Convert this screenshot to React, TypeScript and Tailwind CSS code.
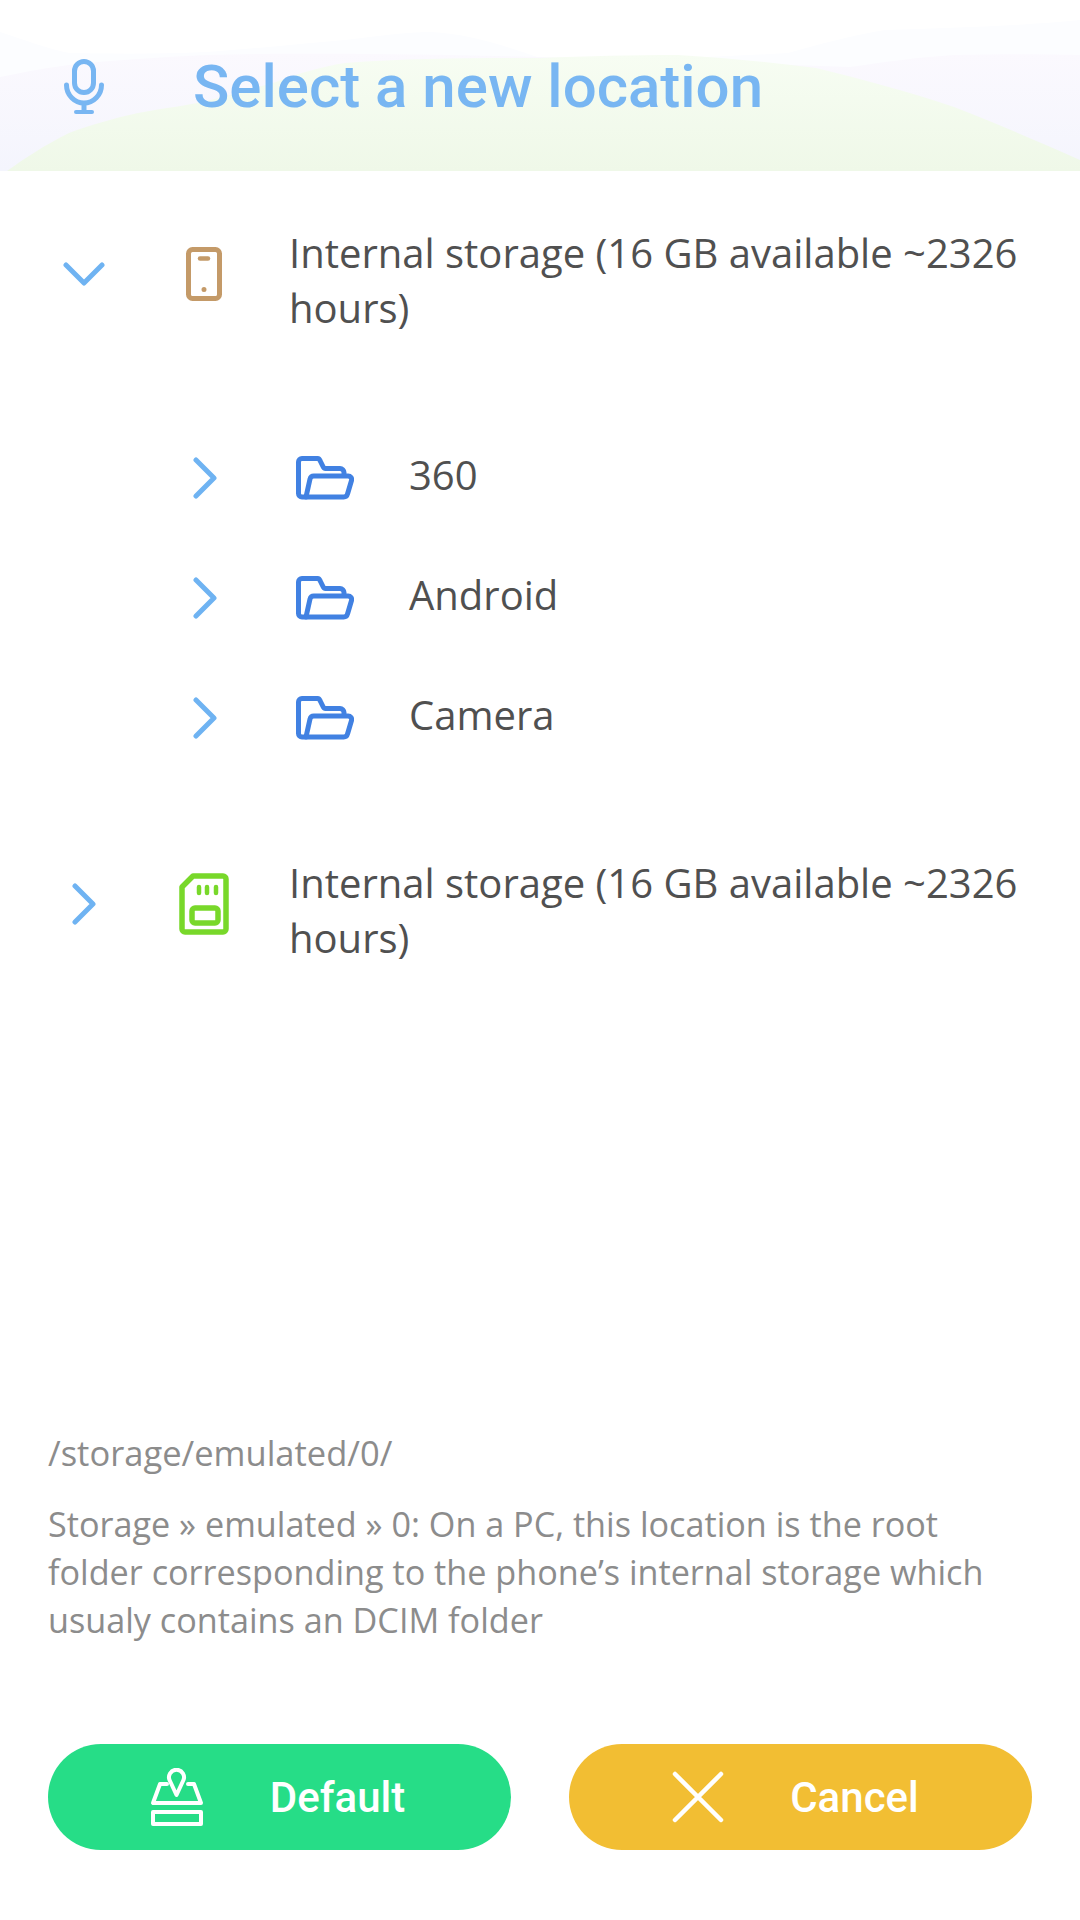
function Mic() {
  return (
    <svg width="40" height="56" viewBox="0 0 40 56" fill="none" stroke="#78b6f2" strokeWidth="5" strokeLinecap="round">
      <rect x="10.500" y="2.500" width="19" height="31" rx="9.500" />
      <path d="M2.500 26c0 10 8 18 17.500 18s17.500-8 17.500-18" />
      <path d="M20 44v8" strokeLinecap="butt" />
      <path d="M12 53h16" strokeWidth="4" />
    </svg>
  );
}

function ChevronDown() {
  return (
    <svg width="42" height="24" viewBox="0 0 42 24" fill="none" stroke="#6fb3f2" strokeWidth="5" strokeLinecap="round" strokeLinejoin="round">
      <path d="M3 3l18 18L39 3" />
    </svg>
  );
}

function ChevronRight() {
  return (
    <svg width="24" height="42" viewBox="0 0 24 42" fill="none" stroke="#6fb3f2" strokeWidth="5" strokeLinecap="round" strokeLinejoin="round">
      <path d="M3 3l18 18L3 39" />
    </svg>
  );
}

function Phone() {
  return (
    <svg width="36" height="54" viewBox="0 0 36 54" fill="none" stroke="#c49a68" strokeWidth="5">
      <rect x="2.500" y="2.500" width="31" height="49" rx="4" />
      <path d="M14 11.500h8" strokeWidth="4.500" strokeLinecap="round" />
      <circle cx="18" cy="42.500" r="1.500" fill="#c49a68" strokeWidth="2" />
    </svg>
  );
}

function Folder() {
  return (
    <svg width="58" height="44" viewBox="0 0 58 44" fill="none" stroke="#4181e2" strokeWidth="5" strokeLinecap="round" strokeLinejoin="round">
      <path d="M10 41H6a3.500 3.500 0 0 1-3.500-3.500V6A3.500 3.500 0 0 1 6 2.500h15a3 3 0 0 1 3 2l3 6a3 3 0 0 0 3 2h14a4 4 0 0 1 4 4V19" />
      <path d="M10 41l4-18a4 4 0 0 1 4-3h34a3.500 3.500 0 0 1 3.500 4.500l-4 13.500a4 4 0 0 1-4 3H10z" />
    </svg>
  );
}

function SdCard() {
  return (
    <svg width="50" height="62" viewBox="0 0 50 62" fill="none" stroke="#78d82a" strokeWidth="5.500" strokeLinejoin="round">
      <path d="M14 3h30a3 3 0 0 1 3 3v50a3 3 0 0 1-3 3H6a3 3 0 0 1-3-3V14L14 3z" />
      <path d="M20 14v6M28 14v6M37 14v6" strokeWidth="4.500" strokeLinecap="round" />
      <rect x="13" y="35" width="26" height="15" rx="3" />
    </svg>
  );
}

function DefaultIcon() {
  return (
    <svg width="54" height="58" viewBox="0 0 52 58" fill="none" stroke="#ffffff" strokeWidth="4" strokeLinejoin="round" strokeLinecap="round">
      <path d="M25.500 27L19 13a7.500 7.500 0 1 1 13 0z" />
      <path d="M16 16H9L2 35h48l-7-19h-6" />
      <rect x="2" y="44" width="48" height="12" />
    </svg>
  );
}

function CloseIcon() {
  return (
    <svg width="52" height="52" viewBox="0 0 52 52" fill="none" stroke="#ffffff" strokeWidth="4.500" strokeLinecap="round">
      <path d="M3 3l46 46M49 3L3 49" />
    </svg>
  );
}

function HeaderWaves() {
  return (
    <svg className="absolute inset-0" width="1080" height="171" viewBox="0 0 1080 171" preserveAspectRatio="none">
      <defs>
        <linearGradient id="greenWave" x1="0" y1="0" x2="0" y2="1">
          <stop offset="0" stopColor="#f7fdf3" />
          <stop offset="1" stopColor="#eff8e8" />
        </linearGradient>
        <linearGradient id="pinkWave" x1="0" y1="0" x2="0" y2="1">
          <stop offset="0" stopColor="#fbf9fe" />
          <stop offset="1" stopColor="#f4f5fd" />
        </linearGradient>
      </defs>
      <path d="M0 32C25 40 45 48 69 53C120 54 160 54 207 52C260 48 300 44 345 40C380 36 405 32 431 32C470 34 505 46 540 58C620 60 700 58 788 53C820 44 850 36 885 30C950 28 1020 26 1080 20V171H0Z" fill="#fcfdff" />
      <path d="M0 77C25 72 45 68 69 65C115 60 160 57 207 55C400 50 640 60 850 67C885 62 920 57 954 55C1000 54 1040 54 1080 55V171H0Z" fill="url(#pinkWave)" />
      <path d="M7 171C25 158 45 145 69 133C90 125 115 118 138 113C165 108 190 105 207 101C230 95 255 88 276 82C300 73 320 67 345 63C410 58 475 58 540 58C590 56 630 55 678 55C725 58 770 62 816 68C865 80 910 92 954 107C1000 125 1040 142 1080 160V171Z" fill="url(#greenWave)" />
    </svg>
  );
}

function StorageRow({ chevron, icon }: { chevron: React.ReactNode; icon: React.ReactNode }) {
  return (
    <div className="flex items-center">
      <div className="flex w-[144px] justify-center pb-[12px] pl-[23px]">{chevron}</div>
      <div className="flex w-[120px] justify-center pb-[12px]">{icon}</div>
      <p className="ml-[25px] w-[760px] text-[40px] leading-[55px] text-[#505050]">
        Internal storage (16 GB available ~2326 hours)
      </p>
    </div>
  );
}

function FolderRow({ name }: { name: string }) {
  return (
    <div className="flex h-[120px] items-center pl-[144px]">
      <div className="flex w-[120px] justify-center pt-[6px] pl-[2px]">
        <ChevronRight />
      </div>
      <div className="flex w-[122px] justify-center pt-[6px]">
        <Folder />
      </div>
      <span className="ml-[23px] text-[40px] text-[#505050]">{name}</span>
    </div>
  );
}

export default function App() {
  return (
    <div className="flex h-[1920px] w-[1080px] flex-col bg-white font-['Open_Sans',sans-serif]">
      <header className="relative flex h-[171px] shrink-0 items-center">
        <HeaderWaves />
        <div className="relative flex w-[193px] justify-center pt-[2px] pr-[26px]">
          <Mic />
        </div>
        <h1 className="relative pt-[3px] font-['Roboto',sans-serif] text-[60px] font-medium text-[#78b6f2]">
          Select a new location
        </h1>
      </header>

      <section className="pt-[54px]">
        <StorageRow chevron={<ChevronDown />} icon={<Phone />} />
        <div className="mt-[80px]">
          <FolderRow name="360" />
          <FolderRow name="Android" />
          <FolderRow name="Camera" />
        </div>
        <div className="mt-[80px]">
          <StorageRow chevron={<ChevronRight />} icon={<SdCard />} />
        </div>
      </section>

      <footer className="mt-auto px-[48px] pb-[70px]">
        <p className="text-[34.5px] leading-[48px] text-[#8c8c8c]">/storage/emulated/0/</p>
        <p className="mt-[23px] w-[960px] text-[34.2px] leading-[48px] text-[#8c8c8c]">
          Storage » emulated » 0: On a PC, this location is the root folder corresponding to the phone’s internal storage which usualy contains an DCIM folder
        </p>
        <div className="mt-[100px] flex gap-[58px] font-['Roboto',sans-serif] text-[42px] font-medium text-white">
          <button className="flex h-[106px] w-[463px] items-center justify-center gap-[66px] rounded-full bg-[#26dd87] pr-[4px]">
            <DefaultIcon />
            <span>Default</span>
          </button>
          <button className="flex h-[106px] w-[463px] items-center justify-center gap-[66px] rounded-full bg-[#f2be33] pr-[10px]">
            <CloseIcon />
            <span>Cancel</span>
          </button>
        </div>
      </footer>
    </div>
  );
}
